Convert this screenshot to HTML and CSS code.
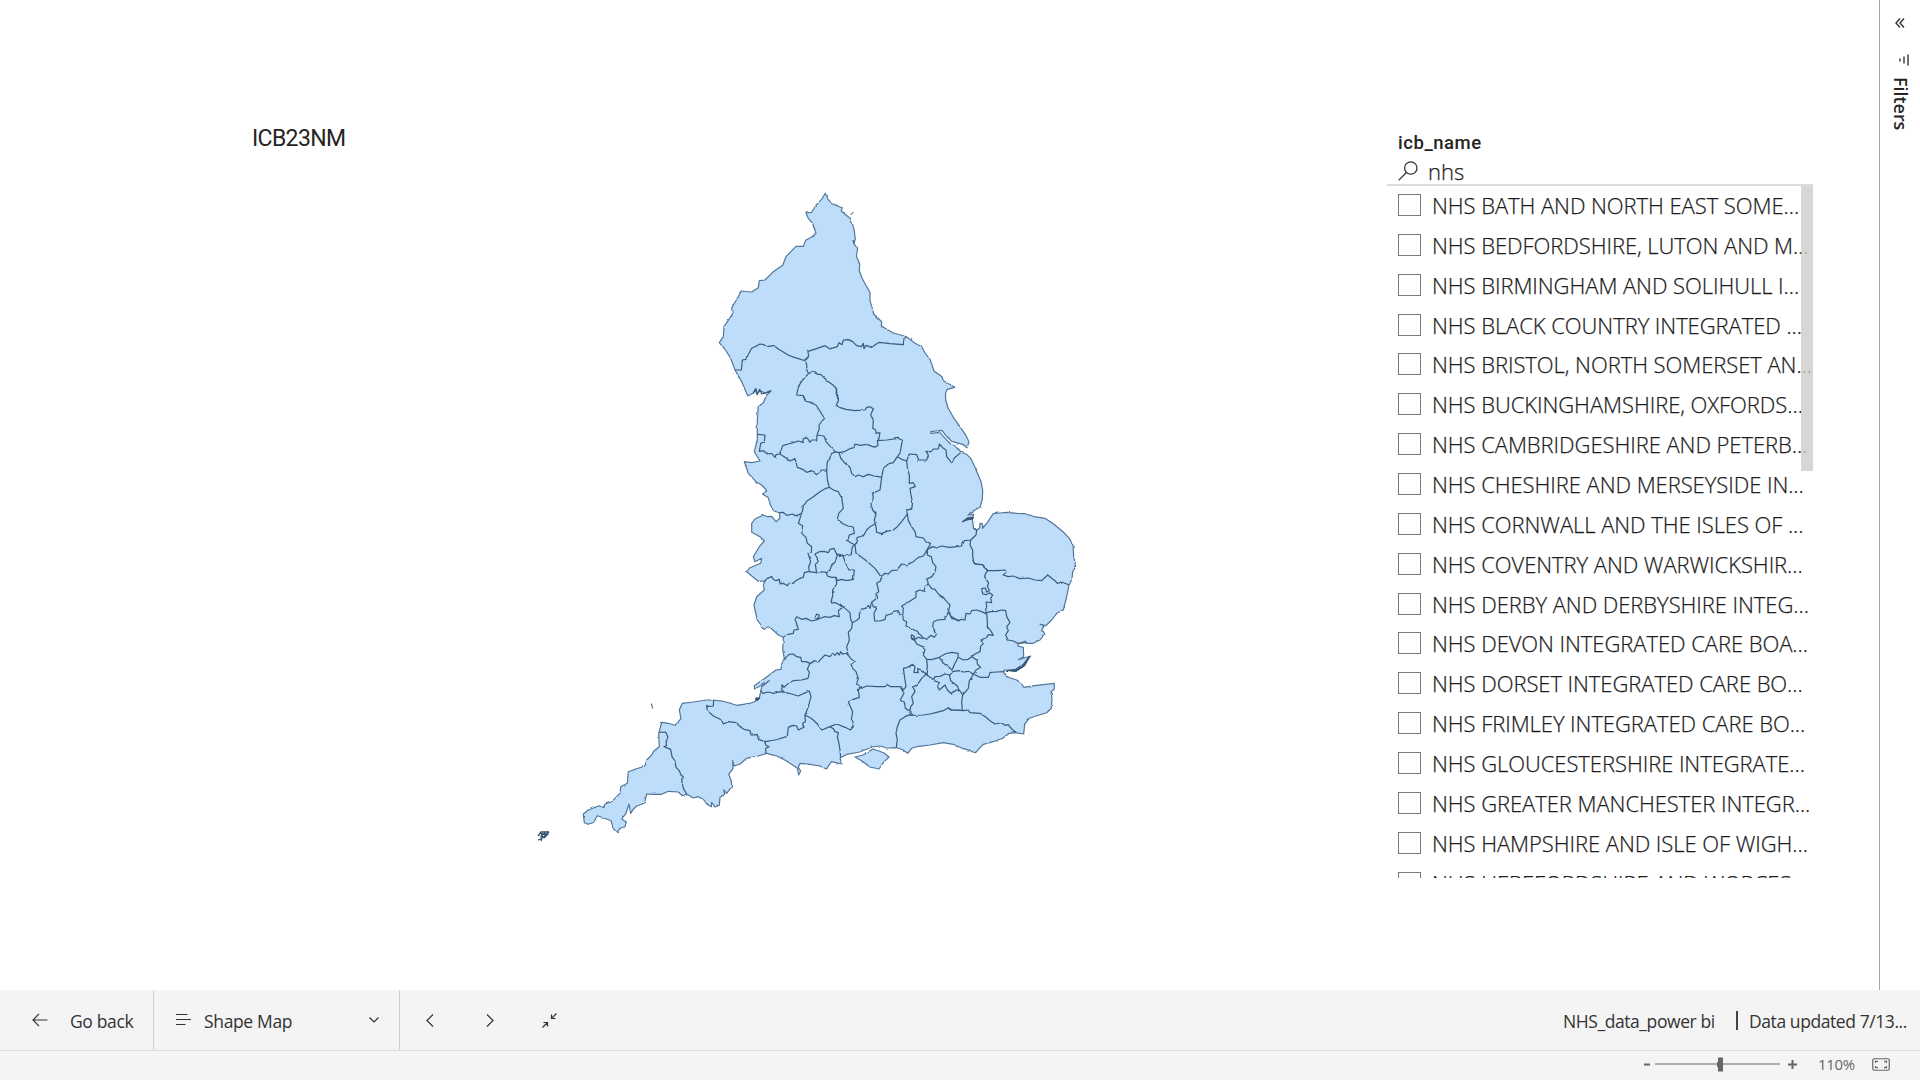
FILE: index.html
```html
<!DOCTYPE html>
<html lang="en">
<head>
<meta charset="utf-8">
<title>NHS_data_power bi</title>
<link rel="stylesheet" href="styles.css">
</head>
<body>
<div class="app">
  <div class="report">
    <main class="canvas">
      <h1 class="map-title">ICB23NM</h1>
      <svg class="map" viewBox="530 180 560 670" width="560" height="670">
        <defs>
          <filter id="rough" filterUnits="userSpaceOnUse" x="530" y="180" width="560" height="670" color-interpolation-filters="sRGB">
            <feTurbulence type="fractalNoise" baseFrequency=".2" numOctaves="1" seed="4"/>
            <feDisplacementMap in="SourceGraphic" scale="2.4" xChannelSelector="R" yChannelSelector="G"/>
          </filter>
        </defs>
        <g filter="url(#rough)">
        <g class="land">
          <path d="M825.3 193.3L828 199.3L831.7 203.3L837.3 206L842.3 207.7L841.3 211L845 214.3L850.7 218.7L852.7 224.7L854.3 230.7L855.3 239.3L853.7 243.3L857.7 249L856.3 256L859.7 264L859.3 270.7L862 278L866.3 286L870 292.3L870 300.7L872 307.3L873.7 314L881.7 321.7L881.3 325.7L886.7 329.3L893.3 333L900.7 335L906.7 337L915 343.3L921.7 346.7L925 353L930 359.3L934 371L942 376.7L943.3 380.7L954.7 387.3L947.3 389.3L945.5 393.3L945.7 400L948.3 408.3L953.3 417.3L960 426.7L966 435.7L969 441.7L967 447.7L962.7 444.3L951.7 441.3L946.7 436.7L942 430.3L936 431L930.7 431.7L931 433.3L940 432.3L945 438.3L950.7 444L956.7 446.7L961 452.3L966.7 454.3L970.7 458.3L975 467.3L981 481.7L982.7 490L982.3 499.3L980 507.3L971.7 511.7L968.3 515L973.7 514.3L972.3 519.3L973.7 529L977 530L979.7 527.7L980 523.3L982.3 523.7L982.7 528L987.3 522.7L990.7 517.3L993.3 513.7L1000 513L1006.7 512.3L1016.7 513.3L1025 513.7L1033.3 516.3L1045 518.3L1053.3 523.7L1063.3 532L1069.3 538.3L1073 545L1073.7 556.7L1075.7 566.7L1072.7 571.7L1072 579L1069 585L1066.7 596.7L1063.3 610L1056.7 613.3L1051.7 620L1045.7 625.7L1040 624.3L1044 626.7L1042 629.3L1044.7 634L1040 640L1033.3 643.3L1026.7 643.3L1025.3 641L1018.3 644L1017.7 646L1023.3 647.3L1023.7 656.7L1018.3 659.7L1030.7 656L1023.3 666.7L1015 670.7L1004 670L1004 673.3L1008.3 677.3L1016.7 680L1021 682.7L1023.7 687.3L1036.7 685.3L1054.3 683.3L1054.3 689.3L1051 691.7L1052 698.3L1051.3 708.3L1046.7 712.7L1036.7 715.7L1029.3 718.3L1024.7 724L1023.7 734L1015 732.7L1009.3 733.3L1002.7 738.3L993.3 741.7L983.3 744.3L980 747.7L975.7 752.7L970 750.3L963.3 748.7L953.3 744.3L943.3 742.7L930 745L916.7 746.7L911.7 748.3L907.7 753.3L902.7 749.7L896.7 747.7L886.7 748L880 746L872 747L859.6 752L847 754.3L840 758L842 764L831.4 761.6L826.5 769L820 766L810 764.3L800 763.3L798.3 767.3L800.7 771L798.7 775L797.3 768.3L786.7 761L776.7 756L766.7 753.3L758.3 756L746.7 758.3L740 764L734 766L732.7 760.7L733 768.3L728.7 774.3L731.3 780.7L731.7 786.7L726.7 793.3L723.7 790L724.7 794.3L720 797.3L719.3 805.3L715 807L711.7 802.3L711.3 806.7L706.7 804L704 800L698.3 796.7L693.3 798L686.7 794L682.3 795.7L678.3 792L668.3 791.3L661.7 794.3L653.3 794.3L646.7 794L644.3 803.3L636.7 806L633.3 809.3L630.7 813.3L629 804L626 813.3L621.7 819L626.3 822L625 826.7L620 828.3L617 832.7L613.3 828.3L611 820.7L603.3 817.7L597.3 815.7L594 821.7L588.3 824.3L584.3 822.7L583.3 814L588.3 810L599.3 805.7L603.3 807.7L605 804L611.7 801.7L620 793.3L620.7 786.7L627.3 783.3L628.3 771.7L635 769.3L645 766L646.7 760L651.7 755L654 750.7L659.3 746.7L658.7 733.3L661.7 722.3L668.3 723.3L675 725.3L681 718.7L679.3 710L682.3 703.3L693.3 702L706.7 700L713.3 700L723.3 701.3L736.7 705.3L750 703.3L755.7 701.3L755.7 698.3L759.3 698L760.7 691.7L761.7 686.7L769.3 680.7L754.7 689L754.3 685.7L765 678.3L776 670L781 669.3L781.7 664L784.3 658.3L782.7 650L783.3 637.3L778.3 635L770 627.3L764.3 629.3L757.3 620L755.3 611L754 605L756.7 596.7L764.3 590L763.3 585L765 581L758.3 581.3L752.7 576.7L746.7 571.7L750 567.7L760.7 563.3L761.7 558.3L755 561.7L753.3 556.7L759.3 546.7L764.3 541L760 536.7L751.7 532.3L751.7 523.3L755 519L763.3 515L767.3 516.7L771.7 516.3L776 521.7L780 518.3L779.3 512.7L773.3 510.7L770 504L768.3 497.7L762.7 494L766.7 490.7L761.7 485L756.7 482.3L748.3 473.3L744.3 461.7L751.7 462.7L760 461L754.3 451.7L757.3 440L757.3 420L758.3 406.7L763.3 402.7L766.7 395L771 391L765 393.3L760 390.5L757 394L755 389.3L753.3 393.3L747.7 395.7L741.7 381.7L735 370L730.7 358.3L725 349.3L719.3 342.7L723.3 336.7L724 326.7L732.3 314.3L731.7 307.7L738.3 296.7L741.3 291L751.7 292L758.3 287.7L759.3 280.7L765 280L773.3 271.7L782.7 265.3L786 256.7L796 246.3L803.3 246.3L806 240L811.7 237L816 233.3L812.7 223.3L808.3 218.3L806 213L811.7 212.3L816.7 204.3L821.7 199.3Z"/>
          <path d="M855 757L863 755L873 749L879 751L884 753L889 757L883 763L879 769L870 767L862 761Z"/>
        </g>
        <g class="islets">
          <path d="M538 836l3 -4 5 0 2 2M540 833l6 2 -3 3M547 831l1 3 -4 4M538 840l3 -1 2 -3M542 838l-1 3M541 834l5 0 -2 3 -3 -1 4 -3"/>
          <path d="M651.5 703.5l1 5M850.5 215l3-3"/>
          <path d="M962 522l5-4 6-1 0 2 -6 1zM1006 670.5l9-1 8-5 6-8 -4 9 -9 6zM756 698h4l-3 3z"/>
        </g>
        <g class="borders">
          <g transform="translate(700 180) scale(.33333)">
            <path d="M105 570L124 570L127 540L138 538L144 526L155 505L165 500L180 492L192 494L200 500L222 497L236 508L250 516L264 525L285 533L313 541L326 528L324 514L350 506L375 497L390 507L402 503L412 500L417 488L426 494L430 480L445 479L458 485L470 497L484 500L490 490L492 506L498 496L515 502L537 487L570 491L610 494L612 475L620 471"/>
            <path d="M313 541L320 552L321 573L326 580L340 576L352 583L362 583L382 603L398 614L410 627L408 640L416 660"/>
            <path d="M326 580L308 600L295 620L290 645L310 647L316 660"/>
            <path d="M458 180L464 190M160 640l8 -14 3 18 8 -16 6 14 14 -4 14 -6"/>
          </g>
          <g transform="translate(720 380) scale(.33333)">
            <path d="M250 48L256 63L272 68L288 75L300 93L307 105L314 115L304 126L297 135L298 146L291 165"/>
            <path d="M348 27L352 40L355 62L348 78L358 82L378 88L405 92L435 90L440 82L450 80L460 86L452 105L460 120L458 145L467 150L468 160L480 158L476 180"/>
            <path d="M291 165L312 168L318 185L345 215L357 218L375 214L390 206L402 203L405 192L420 196L440 193L465 202L474 196L472 182L500 180L535 175L547 181L540 220L532 230"/>
            <path d="M291 165L290 180L275 180L270 187L262 174L250 176L248 187L235 183L220 188L205 192L188 197L180 222L168 224L165 232L155 220L142 222L130 212L118 214L122 190L133 186L135 165L112 163"/>
            <path d="M180 222L198 234L210 243L225 236L232 262L248 268L260 277L275 272L290 284L305 270L320 270L322 245L330 236L335 220L348 216"/>
            <path d="M320 270L322 300L328 322L318 325L300 335L278 352L262 362L250 378L247 395L238 404L225 407L218 402L200 406L190 397L178 398"/>
            <path d="M328 322L340 330L355 335L365 355L370 385L356 400L352 418L370 432L384 438L400 441L403 460L388 465L383 482L395 490L405 495"/>
            <path d="M357 218L362 234L375 250L390 262L395 280L405 290L415 285L430 290L445 283L462 288L475 290L485 292L490 265L505 252L520 248L532 230L545 238L560 243L568 222L590 224L596 240L620 240L625 225L618 214L635 215L640 207L655 207L658 192L670 205L678 210L680 230L695 248L703 234L722 218"/>
            <path d="M485 292L482 315L480 330L458 340L460 355L453 370L458 390L468 402L463 420L468 440L470 457L485 461L500 454L520 450L532 440L545 425L562 402L560 392L575 385L578 368L572 340L570 325L586 320L580 308L568 310L568 285L563 270L560 243"/>
            <path d="M562 402L565 422L575 440L585 455L588 470L610 474L618 486L632 490L622 508L640 500L650 504L665 498L690 502L710 500L725 498L733 482L752 480L768 465L770 452L762 442"/>
            <path d="M752 480L750 495L758 510L758 530L762 550L785 555L803 572"/>
            <path d="M245 400L240 415L235 430L248 438L245 460L258 472L262 490L275 500L274 515L264 520L272 545L266 560L268 575"/>
            <path d="M465 432L450 440L440 450L430 468L412 472L405 495L397 500L393 525L365 528L350 523L342 505L330 508L325 518L312 514L298 515L285 522L295 545L286 553L290 580"/>
            <path d="M405 495L408 520L425 532L440 543L465 565L483 590L495 580L505 582L515 572L530 570L545 552L560 555L580 545L595 532L610 528L622 508L622 525L634 530L638 548L648 560L645 575L636 590L618 598"/>
          </g>
          <g transform="translate(730 540) scale(.33333)">
            <path d="M236 95L223 98L220 112L208 116L195 124L190 130L180 126L172 137L160 130L150 132L148 118L138 122L130 118L125 110L112 115L103 124"/>
            <path d="M236 95L260 98L275 95L290 98L292 108L305 112L318 112L322 122L335 118L350 122L370 118L373 90L357 90L345 65L338 45L320 42"/>
            <path d="M290 98L300 90L304 78L316 65L322 45"/>
            <path d="M318 112L320 132L308 150L308 168L303 185L320 190L330 196L338 202L325 212L328 230L312 227L300 232L285 230L265 237L255 234L260 222L268 226L265 238L245 243L228 235L215 238L200 230L195 240L200 252L205 268L192 270L190 280L175 283L160 292"/>
            <path d="M330 192L345 205L360 218L362 238L367 248L378 242L388 235L388 222L395 208L410 204L415 196L420 205L425 187L440 175L438 162L446 155L443 140L440 130L452 122L453 110"/>
            <path d="M425 187L430 200L440 205L432 220L434 243L450 243L465 238L468 226L482 222L490 214L505 212L510 224L518 225L520 240L530 246L528 258L550 268L565 280L580 293L590 298L602 286L615 292L620 280L608 262L610 246L622 240L645 238L655 215L660 195L650 185L640 172L625 162L615 148L605 146L595 132L592 120"/>
            <path d="M518 225L520 205L515 198L530 190L545 180L558 172L558 155L570 150L582 154L585 140L595 132"/>
            <path d="M655 215L665 235L690 242"/>
            <path d="M367 248L365 265L355 278L358 300L350 320L354 345L362 355L373 365L363 372L368 385L378 395L385 415L380 430L392 442L385 450L388 472L370 478L355 487L368 515L364 540L370 560L362 570L345 562L320 552L300 560L275 570L262 552L250 540L238 532L225 525L235 500L243 470L238 453L222 460L205 468L185 462L165 457L150 455L130 460L115 456L98 460L92 450"/>
            <path d="M300 560L310 566L315 575L325 578L322 592L326 606L330 630L332 652"/>
            <path d="M225 525L226 545L218 550L222 562L205 570L200 558L188 556L175 562L172 588"/>
            <path d="M354 345L345 338L338 343L332 335L328 345L322 338L315 346L308 340L300 350L285 345L275 355L265 366L252 362L240 370L228 365L215 365L212 352L200 350L190 342L178 343L170 350L163 360"/>
            <path d="M240 370L232 388L238 396L234 415L215 420L190 422L175 430L162 442L156 434L155 450L165 457"/>
            <path d="M392 445L410 438L440 440L465 440L472 434L482 440L512 440L520 450L528 440L525 420L520 385L532 382L548 373L555 380L552 397L565 398L562 386L575 390L588 403L592 380L590 358L580 345L585 330L578 320L560 312L555 302L543 292L545 284L554 290L550 300L565 292L580 296"/>
            <path d="M512 443L522 460L511 480L524 490L526 505L540 512L540 524L525 530L510 540L502 560L498 580L502 600L499 622"/>
            <path d="M588 403L575 415L565 430L550 442L555 455L545 470L550 490L542 500L540 512"/>
            <path d="M540 526L580 525L600 522L620 517L640 512L655 503L665 510L697 511"/>
          </g>
          <g transform="translate(880 560) scale(.33333)">
            <path d="M139 298L155 299L178 292L195 282L215 277L235 280L233 295L224 312L216 330L205 320L190 310L178 292"/>
            <path d="M235 292L250 300L265 298L275 290L290 300L292 312L302 322L288 330L280 342L265 334L250 336L235 332L218 335L210 345L195 342L180 349L165 350L162 358L150 352L138 343"/>
            <path d="M162 362L178 368L172 378L178 390L195 375L202 390L215 402L228 390L238 392L232 378L212 362L208 345"/>
            <path d="M238 390L248 405L265 385L268 362L275 352L280 342L300 352L325 352L330 338L350 336L372 335"/>
            <path d="M248 405L245 425L247 450"/>
            <path d="M205 445L212 450L230 450L250 452L265 450L270 458L300 460L318 472L330 482L345 492L365 488L375 496L385 494L396 508L408 517"/>
            <path d="M275 290L285 282L300 275L302 260L310 250L303 240L320 232L325 224L340 226L332 212L322 200L322 180L320 165L316 155"/>
            <path d="M208 155L212 168L235 183L245 178L255 180L258 160L270 162L275 152L290 150L305 155L316 160L330 155L350 154L365 150L377 152L380 170L390 188L380 200L385 212L377 225L384 240L400 243L413 250L440 248"/>
            <path d="M316 155L320 138L318 126L335 128L332 115L338 105L328 98L318 104L308 102L305 86L316 84L320 96L328 92L322 78L326 70L314 50L316 42L323 32L308 14L285 12L278 0"/>
            <path d="M323 32L350 32L375 30L378 36L370 45L385 50L400 48L420 56L445 54L465 60L485 62L503 45L515 55L525 62L532 70L545 66L568 75"/>
          </g>
          <g transform="translate(520 660) scale(.33333)">
            <path d="M581 120L580 138L560 140L562 152L580 168L605 180L610 192L625 185L650 188L660 200L672 208L690 212L693 225L712 224L715 238L735 245L765 240L800 230"/>
            <path d="M735 245L737 255L747 260L737 265L738 282"/>
            <path d="M418 217L437 216L444 232L438 245L440 256L432 260L452 268L456 290L465 303L468 322L478 332L483 345L490 350L485 362L490 385L500 402"/>
          </g>
        </g>
        </g>
      </svg>
      <section class="slicer">
        <h2 class="slicer-title">icb_name</h2>
        <div class="search">
          <svg width="20" height="20" viewBox="0 0 20 20"><circle cx="12.8" cy="7" r="6.2"/><path d="M8.4 11.5L.6 19.4"/></svg>
          <span>nhs</span>
        </div>
        <div class="list">
          <div class="row"><i class="box"></i><span>NHS BATH AND NORTH EAST SOME...</span></div>
          <div class="row"><i class="box"></i><span>NHS BEDFORDSHIRE, LUTON AND M...</span></div>
          <div class="row"><i class="box"></i><span>NHS BIRMINGHAM AND SOLIHULL I...</span></div>
          <div class="row"><i class="box"></i><span>NHS BLACK COUNTRY INTEGRATED ...</span></div>
          <div class="row"><i class="box"></i><span>NHS BRISTOL, NORTH SOMERSET AN...</span></div>
          <div class="row"><i class="box"></i><span>NHS BUCKINGHAMSHIRE, OXFORDS...</span></div>
          <div class="row"><i class="box"></i><span>NHS CAMBRIDGESHIRE AND PETERB...</span></div>
          <div class="row"><i class="box"></i><span>NHS CHESHIRE AND MERSEYSIDE IN...</span></div>
          <div class="row"><i class="box"></i><span>NHS CORNWALL AND THE ISLES OF ...</span></div>
          <div class="row"><i class="box"></i><span>NHS COVENTRY AND WARWICKSHIR...</span></div>
          <div class="row"><i class="box"></i><span>NHS DERBY AND DERBYSHIRE INTEG...</span></div>
          <div class="row"><i class="box"></i><span>NHS DEVON INTEGRATED CARE BOA...</span></div>
          <div class="row"><i class="box"></i><span>NHS DORSET INTEGRATED CARE BO...</span></div>
          <div class="row"><i class="box"></i><span>NHS FRIMLEY INTEGRATED CARE BO...</span></div>
          <div class="row"><i class="box"></i><span>NHS GLOUCESTERSHIRE INTEGRATE...</span></div>
          <div class="row"><i class="box"></i><span>NHS GREATER MANCHESTER INTEGR...</span></div>
          <div class="row"><i class="box"></i><span>NHS HAMPSHIRE AND ISLE OF WIGH...</span></div>
          <div class="row"><i class="box"></i><span>NHS HEREFORDSHIRE AND WORCES...</span></div>
          <div class="thumb"></div>
        </div>
      </section>
    </main>
    <aside class="filters">
      <svg width="10" height="10" viewBox="0 0 10 10"><path d="M5 .5L1 5L5 9.500M9 .5L5 5L9 9.500"/></svg>
      <svg class="funnel" width="10" height="12" viewBox="0 0 10 12"><path d="M9 .5V11.500M5 2.500V9.500M1 4.500V7.500"/></svg>
      <span>Filters</span>
    </aside>
  </div>
  <footer class="nav">
    <div class="back">
      <svg width="16" height="14" viewBox="0 0 16 14"><path d="M7 .8L1 7L7 13.200M1 7H15.500"/></svg>
      <span>Go back</span>
    </div>
    <div class="page">
      <svg width="15" height="12" viewBox="0 0 15 12"><path d="M0 .5H11.500M0 5.500H15M0 10.500H9.500"/></svg>
      <span>Shape Map</span>
      <svg class="chev" width="10" height="6" viewBox="0 0 10 6"><path d="M.5 .5L5 5L9.500 .5"/></svg>
    </div>
    <div class="steps">
      <svg width="8" height="13" viewBox="0 0 8 13"><path d="M7 .5L1 6.500L7 12.500"/></svg>
      <svg width="8" height="13" viewBox="0 0 8 13"><path d="M1 .5L7 6.500L1 12.500"/></svg>
      <svg width="15" height="15" viewBox="0 0 15 15"><path d="M14.500 .5L9.500 5.500M9.500 1.500V5.500H13.500M.5 14.500L5.500 9.500M1.500 9.500H5.500V13.500"/></svg>
    </div>
    <div class="meta"><span class="name">NHS_data_power bi</span><i class="bar"></i><span class="updated">Data updated 7/13...</span></div>
  </footer>
  <div class="status">
    <svg class="zoom" width="154" height="16" viewBox="0 0 154 16"><path class="sign" d="M0 8.500H6M144 8.500H153M148.500 4V13"/><path d="M11 8H136"/><path class="knob" d="M74 1.500H79V15.500H74zM73 6H74V11H73z"/></svg>
    <span class="pct">110%</span>
    <svg width="18" height="13" viewBox="0 0 18 13"><rect x=".75" y=".75" width="16.500" height="11.500" rx="1.500"/><path d="M3.500 5V3.300H6M12 3.300H14.500V5M14.500 8V9.700H12M6 9.700H3.500V8"/></svg>
  </div>
</div>
</body>
</html>
```
FILE: styles.css
```css
* { box-sizing: border-box; }
body { margin: 0; background: #fff; color: #252423; font-family: "Open Sans", "Noto Sans", sans-serif; }
.app { width: 1920px; height: 1080px; display: grid; grid-template-rows: 990px 61px 29px; overflow: hidden; }
.report { display: grid; grid-template-columns: 1879px 41px; }
.canvas { display: grid; grid-template-columns: 277px 560px 426px; padding-left: 252px; align-items: start; }
.map-title { margin: 125px 0 0; font: 400 23px/28px Roboto, sans-serif; letter-spacing: -.65px; white-space: nowrap; }
.map { margin: 180px 0 0 1px; display: block; }
.land path { fill: #bdddfb; stroke: #52769a; stroke-width: 1.2; stroke-linejoin: round; }
.borders path { fill: none; stroke: #3a5b7a; stroke-width: 1.2; stroke-linejoin: round; vector-effect: non-scaling-stroke; }
.islets path { fill: #3f658a; stroke: #31516f; stroke-width: 1; }
.islets path:first-child { fill: none; stroke-width: 1.3; }

.slicer { margin: 131px 0 0 298px; width: 426px; height: 747px; overflow: hidden; display: flex; flex-direction: column; }
.slicer-title { margin: 0 0 0 11px; font: 500 18.500px/24px Roboto, sans-serif; letter-spacing: .55px; }
.search { height: 31px; flex: none; display: flex; align-items: center; gap: 10px; padding: 3px 0 0 11px; border-bottom: 2px solid #dcdcdc; font-size: 22px; font-weight: 300; -webkit-text-stroke: .25px currentColor; }
.search svg { margin-top: -1px; fill: none; stroke: #333; stroke-width: 1.3; }
.list { position: relative; flex: 1; overflow: hidden; }
.row { height: 39.87px; display: flex; align-items: center; gap: 11px; padding: 0 0 2px 11px; white-space: nowrap; font-size: 22px; font-weight: 300; letter-spacing: -.06px; color: #1c1c1c; -webkit-text-stroke: .25px currentColor; }
.box { width: 23px; height: 22px; flex: none; border: 1.500px solid #7a7a7a; background: #fff; }
.thumb { position: absolute; right: 0; top: 0; width: 12px; height: 285px; background: rgba(205, 204, 203, .8); }

.filters { border-left: 1px solid #a6a6a6; display: flex; flex-direction: column; align-items: center; padding-top: 18px; }
.filters svg { fill: none; stroke: #333; stroke-width: 1.4; }
.filters .funnel { margin: 26px 0 0 7px; }
.filters span { writing-mode: vertical-rl; margin: 11px 0 0 2px; font-size: 17.900px; font-weight: 600; line-height: 24px; }

.nav { display: flex; background: #f4f4f4; border-bottom: 1px solid #dcdcdc; font-size: 17.500px; font-weight: 400; letter-spacing: -.35px; color: #333; white-space: nowrap; }
.nav svg { fill: none; stroke: #333; stroke-width: 1.2; flex: none; }
.nav > div { display: flex; align-items: center; }
.nav span { padding-top: 1px; }
.back { width: 154px; border-right: 1px solid #d0d0d0; padding-left: 32px; gap: 22px; }
.page { width: 246px; border-right: 1px solid #d0d0d0; padding: 0 20px 0 22px; }
.page span { margin-left: 13px; }
.page .chev { margin-left: auto; }
.steps { padding-left: 26px; gap: 52px; }
.steps svg + svg + svg { margin-left: -4px; }
.nav .meta { margin-left: auto; width: 357px; letter-spacing: -.42px; }
.name { width: 173px; }
.bar { width: 2px; height: 19px; background: #444; margin-right: 11px; }

.status { display: flex; align-items: center; background: #f4f4f4; padding: 0 0 3px 1644px; color: #666; }
.status svg { fill: none; stroke: #666; stroke-width: 1.2; flex: none; }
.status .sign { stroke-width: 2; }
.status .knob { fill: #666; stroke: none; }
.pct { width: 54px; margin-left: 20px; font-size: 15px; letter-spacing: -.3px; }
```
